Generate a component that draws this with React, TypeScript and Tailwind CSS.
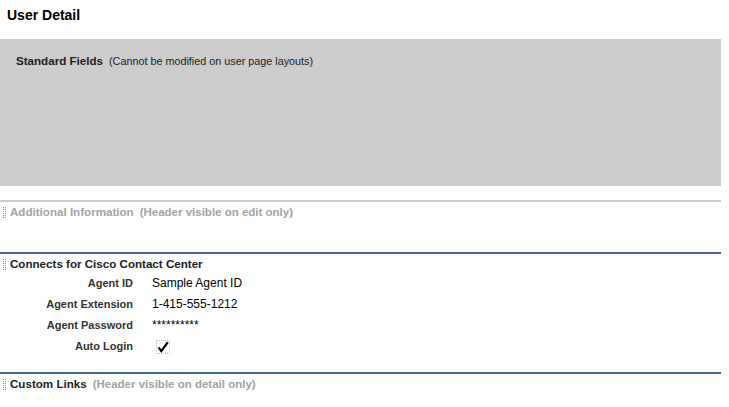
import React from "react";

const font = { fontFamily: '"Liberation Sans", Arial, sans-serif' };

function Grip() {
  const dots: React.ReactNode[] = [];
  for (let y = 0; y < 11; y += 2) {
    dots.push(<rect key={`a${y}`} x={0} y={y} width={1} height={1} fill="#8c8c8c" />);
    dots.push(<rect key={`b${y}`} x={2} y={y} width={1} height={1} fill="#8c8c8c" />);
  }
  return (
    <svg width="3" height="11" viewBox="0 0 3 11" className="mr-[4px] self-center shrink-0" shapeRendering="crispEdges">
      {dots}
    </svg>
  );
}

function SectionHeader({
  title,
  note,
  muted,
  lineColor,
}: {
  title: string;
  note?: string;
  muted?: boolean;
  lineColor: string;
}) {
  return (
    <div className={`w-[721px] border-t-2 ${lineColor} pt-[3px]`}>
      <div className="flex items-center pl-[3px] h-[14px]">
        <Grip />
        <div className="flex items-baseline gap-[6px] leading-[14px]">
          <span className={`text-[11.6px] font-bold ${muted ? "text-[#a3a3a3]" : "text-[#222]"}`}>{title}</span>
          {note && <span className="text-[11.5px] font-bold text-[#a3a3a3]">{note}</span>}
        </div>
      </div>
    </div>
  );
}

function Row({ label, children }: { label: string; children: React.ReactNode }) {
  return (
    <div className="flex items-baseline h-[21px] leading-[21px]">
      <div className="w-[133px] text-right text-[11px] font-bold text-[#333]">{label}</div>
      <div className="pl-[19px] text-[12px] text-black">{children}</div>
    </div>
  );
}

export default function App() {
  return (
    <div className="w-[729px] h-[407px] bg-white overflow-hidden" style={font}>
      <div className="h-[39px] pt-[7px] pl-[7px] text-[14px] leading-[16px] font-bold text-black">User Detail</div>
      <div className="w-[721px] h-[147px] bg-[#cccccc] pt-[15px] pl-[16px]">
        <div className="flex items-baseline gap-[6px] leading-[14px]">
          <span className="text-[11.6px] font-bold text-[#222]">Standard Fields</span>
          <span className="text-[10.8px] text-[#222]">(Cannot be modified on user page layouts)</span>
        </div>
      </div>
      <div className="h-[14px]" />
      <SectionHeader
        title="Additional Information"
        note="(Header visible on edit only)"
        muted
        lineColor="border-[#cccccc]"
      />
      <div className="h-[33px]" />
      <SectionHeader title="Connects for Cisco Contact Center" lineColor="border-[#41698f]" />
      <div className="pt-[2px]">
        <Row label="Agent ID">Sample Agent ID</Row>
        <Row label="Agent Extension">1-415-555-1212</Row>
        <Row label="Agent Password">**********</Row>
        <Row label="Auto Login">
          <span className="inline-flex w-[14px] h-[14px] ml-[4px] border border-dotted border-[#c8c8c8] items-center justify-center align-[-3px]">
            <svg width="12" height="12" viewBox="0 0 12 12">
              <path d="M1.5 6.3 L4.3 10.2 L10.8 1.2" fill="none" stroke="#000" strokeWidth="2.1" strokeLinecap="butt" strokeLinejoin="miter" />
            </svg>
          </span>
        </Row>
      </div>
      <div className="h-[15px]" />
      <SectionHeader
        title="Custom Links"
        note="(Header visible on detail only)"
        lineColor="border-[#41698f]"
      />
    </div>
  );
}
